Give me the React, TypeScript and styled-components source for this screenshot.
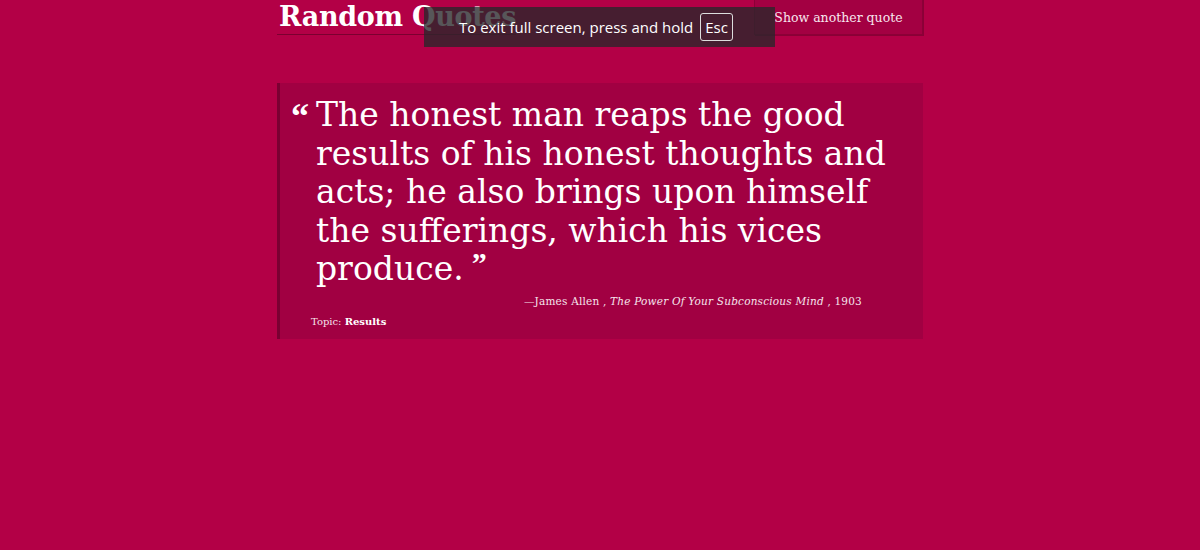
import styled, { createGlobalStyle } from "styled-components";

const GlobalStyle = createGlobalStyle`
  html, body {
    margin: 0;
    padding: 0;
    background: #b30046;
  }
  body {
    font-family: "DejaVu Serif", "Liberation Serif", serif;
    color: #fff;
  }
`;

const Page = styled.main`
  width: 646px;
  margin: 0 auto;
`;

const Header = styled.header`
  display: flex;
  justify-content: space-between;
  align-items: flex-start;
  height: 36px;
`;

const Title = styled.h1`
  margin: 0;
  padding: 0 0 0 2px;
  font-size: 27px;
  line-height: 34px;
  font-weight: bold;
  letter-spacing: -0.3px;
  border-bottom: 1px solid #7c0030;
`;

const AnotherButton = styled.button`
  width: 169px;
  height: 36px;
  margin-top: -1px;
  background: #a30042;
  border: 1px solid #8c0037;
  box-shadow: 1px 1px 0 #8a0036;
  color: #f7e6ee;
  font-family: "DejaVu Serif", serif;
  font-size: 12.5px;
  padding: 0;
  cursor: pointer;
`;

const QuoteCard = styled.section`
  margin-top: 47px;
  background: #a10042;
  border-left: 3px solid #7a0032;
  padding: 13px 28px 12px 11px;
`;

const QuoteRow = styled.div`
  display: flex;
  align-items: flex-start;
`;

const OpenMark = styled.span`
  width: 25px;
  font-family: "Liberation Serif", serif;
  font-size: 36px;
  line-height: 40px;
  font-weight: bold;
  flex-shrink: 0;
`;

const QuoteText = styled.blockquote`
  margin: 0;
  width: 585px;
  font-size: 33px;
  line-height: 38.5px;
`;

const CloseMark = styled.span`
  font-family: "Liberation Serif", serif;
  font-size: 30px;
  line-height: 0;
  font-weight: bold;
  vertical-align: 7px;
  margin-left: 8px;
`;

const Attribution = styled.p`
  margin: 6px 33px 0 0;
  text-align: right;
  font-size: 10.5px;
  letter-spacing: 0.2px;
  color: #f5e4ec;

  cite {
    font-style: italic;
  }
`;

const Topic = styled.p`
  margin: 9px 0 0 20px;
  font-size: 10px;
  color: #f5e4ec;

  strong {
    color: #fff;
  }
`;

const FullscreenNotice = styled.div`
  position: absolute;
  left: 424px;
  top: 7px;
  width: 351px;
  height: 40px;
  box-sizing: border-box;
  padding: 0 0 0 35px;
  display: flex;
  align-items: center;
  gap: 7px;
  background: rgba(40, 38, 42, 0.78);
  color: #fff;
  font-family: "Open Sans", "DejaVu Sans", sans-serif;
  font-size: 15px;
`;

const Key = styled.span`
  border: 1px solid #ddd;
  border-radius: 3px;
  padding: 3px 4px;
  line-height: 20px;
`;

export default function App() {
  return (
    <>
      <GlobalStyle />
      <Page>
        <Header>
          <Title>Random Quotes</Title>
          <AnotherButton>Show another quote</AnotherButton>
        </Header>
        <QuoteCard>
          <QuoteRow>
            <OpenMark>“</OpenMark>
            <QuoteText>
              The honest man reaps the good results of his honest thoughts and
              acts; he also brings upon himself the sufferings, which his vices
              produce.
              <CloseMark>”</CloseMark>
            </QuoteText>
          </QuoteRow>
          <Attribution>
            —James Allen , <cite>The Power Of Your Subconscious Mind</cite> ,
            1903
          </Attribution>
          <Topic>
            Topic: <strong>Results</strong>
          </Topic>
        </QuoteCard>
      </Page>
      <FullscreenNotice>
        To exit full screen, press and hold <Key>Esc</Key>
      </FullscreenNotice>
    </>
  );
}
